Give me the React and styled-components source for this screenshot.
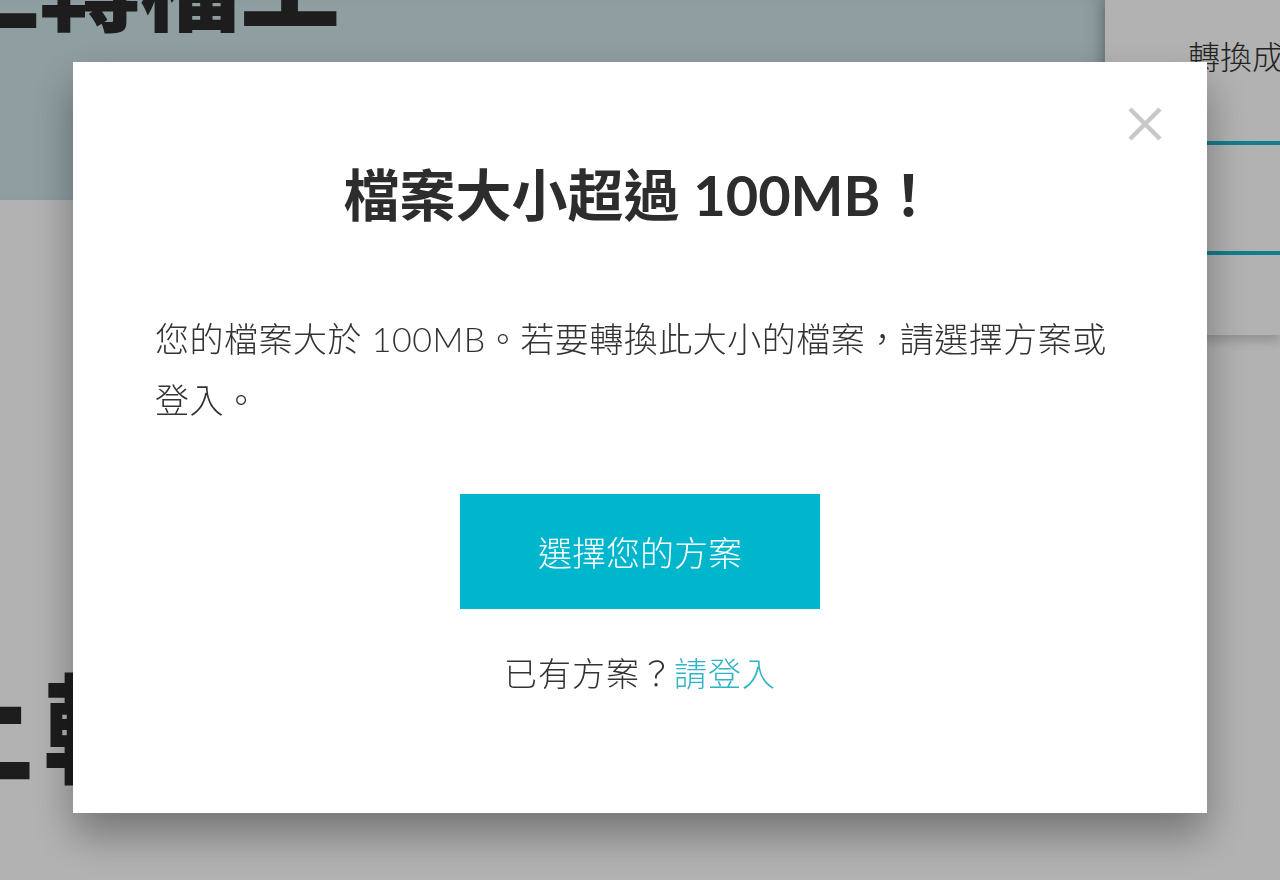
import styled, { createGlobalStyle } from "styled-components";


const GlobalStyle = createGlobalStyle`
    html, body {
        margin: 0;
        padding: 0;
        background: #ffffff;
        font-family: "Lato", "Noto Sans CJK TC", sans-serif;
        color: #333333;
        overflow: hidden;
    }
`;

const CloseIcon = () => (
    <svg width="34" height="34" viewBox="0 0 34 34">
        <path
            d="M2 2 L32 32 M32 2 L2 32"
            stroke="#c8c8c8"
            strokeWidth="4.5"
            fill="none"
        />
    </svg>
);

const App = () => {
    return (
        <>
            <GlobalStyle />
            <Page>
                <MainColumn>
                    <Hero>
                        <HeroTitle>線上轉檔工</HeroTitle>
                    </Hero>
                    <Section>
                        <SectionTitle>線上轉檔</SectionTitle>
                    </Section>
                </MainColumn>
                <SidePanel>
                    <SideLabel>轉換成</SideLabel>
                    <SideOption />
                    <SideOption />
                </SidePanel>
            </Page>

            <Overlay>
                <Modal>
                    <CloseButton aria-label="close">
                        <CloseIcon />
                    </CloseButton>
                    <Title>檔案大小超過 100MB！</Title>
                    <Message>
                        您的檔案大於 100MB。若要轉換此大小的檔案，請選擇方案或登入。
                    </Message>
                    <PlanButton>選擇您的方案</PlanButton>
                    <LoginLine>
                        已有方案？<LoginLink href="#">請登入</LoginLink>
                    </LoginLine>
                </Modal>
            </Overlay>
        </>
    );
}

export default App;


const Page = styled.div`
    display: grid;
    grid-template-columns: 1105px 175px;
    align-items: start;
    width: 1280px;
    height: 880px;
    overflow: hidden;
`;

const MainColumn = styled.div`
    display: flex;
    flex-direction: column;
    overflow: hidden;
`;

const Hero = styled.div`
    height: 200px;
    background: #cde2e7;
    overflow: hidden;
    box-shadow: inset -18px 0 20px -16px rgba(0, 0, 0, 0.25);
`;

const HeroTitle = styled.h1`
    margin: -80px 0 0 -160px;
    font-family: "Noto Sans CJK TC", sans-serif;
    font-size: 100px;
    font-weight: 900;
    line-height: 1.2;
    color: #2a2a2a;
    white-space: nowrap;
`;

const Section = styled.div`
    padding-top: 452px;
    overflow: hidden;
`;

const SectionTitle = styled.h2`
    margin: 0 0 0 -212px;
    font-family: "Noto Sans CJK TC", sans-serif;
    font-size: 118px;
    font-weight: 900;
    letter-spacing: 10px;
    line-height: 1.2;
    color: #2a2a2a;
    white-space: nowrap;
`;

const SidePanel = styled.div`
    height: 335px;
    background: #ffffff;
    box-shadow: 0 6px 10px rgba(0, 0, 0, 0.18);
    padding-top: 33px;
    box-sizing: border-box;
`;

const SideLabel = styled.div`
    padding-left: 83px;
    font-family: "Noto Sans CJK TC", sans-serif;
    font-size: 32px;
    font-weight: 300;
    line-height: 44px;
    color: #333333;
    white-space: nowrap;
    height: 108px;
`;

const SideOption = styled.div`
    height: 106px;
    border-top: 4px solid #1bb5c8;
`;

const Overlay = styled.div`
    position: fixed;
    inset: 0;
    background: rgba(0, 0, 0, 0.3);
    display: flex;
    justify-content: center;
    align-items: flex-start;
    padding-top: 62px;
`;

const Modal = styled.div`
    position: relative;
    width: 1134px;
    height: 751px;
    box-sizing: border-box;
    background: #ffffff;
    padding: 98px 82px 0;
    display: flex;
    flex-direction: column;
    align-items: center;
    box-shadow: 0 22px 40px rgba(0, 0, 0, 0.35);
`;

const CloseButton = styled.button`
    position: absolute;
    top: 45px;
    right: 45px;
    width: 34px;
    height: 34px;
    padding: 0;
    border: none;
    background: none;
    display: flex;
    cursor: pointer;
`;

const Title = styled.h2`
    margin: 0;
    font-size: 56px;
    font-weight: 700;
    line-height: 70px;
    color: #2d2d2d;
    text-align: center;
    white-space: nowrap;
`;

const Message = styled.p`
    align-self: stretch;
    margin: 78px 0 0;
    font-size: 34px;
    font-weight: 300;
    letter-spacing: 0.5px;
    line-height: 61px;
    color: #333333;
`;

const PlanButton = styled.button`
    margin-top: 64px;
    width: 360px;
    height: 115px;
    border: none;
    background: #00b6cc;
    color: #ffffff;
    font-family: "Noto Sans CJK TC", sans-serif;
    font-size: 34px;
    font-weight: 300;
    cursor: pointer;
`;

const LoginLine = styled.div`
    margin-top: 39px;
    font-family: "Noto Sans CJK TC", sans-serif;
    font-size: 33px;
    font-weight: 300;
    letter-spacing: 1px;
    line-height: 48px;
    color: #333333;
`;

const LoginLink = styled.a`
    color: #2fb3c6;
    text-decoration: none;
`;
